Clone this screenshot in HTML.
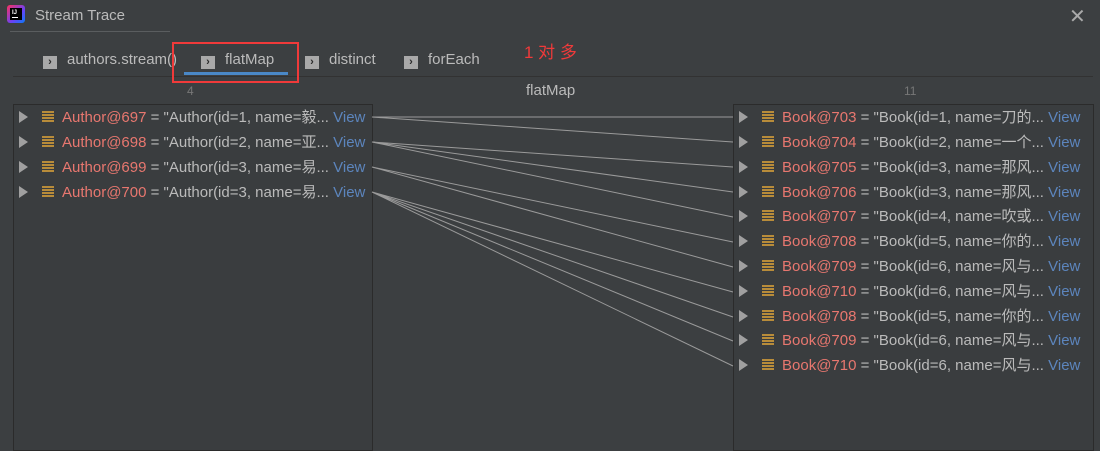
<!DOCTYPE html><html><head><style>
body{margin:0;width:1100px;height:444px;background:#3c3f41;font-family:"Liberation Sans","Noto Sans CJK SC",sans-serif;color:#bbbbbb;position:relative;overflow:hidden;font-size:15px}
.a{position:absolute;white-space:nowrap}
.panel{position:absolute;top:104px;height:345px;border:1px solid #2b2b2b;background:#3a3d3f;overflow:hidden}
.row{position:absolute;left:0;height:24px;line-height:24px;white-space:nowrap;font-size:15px}
.tri{display:inline-block;width:0;height:0;border-left:9px solid #a0a0a0;border-top:6px solid transparent;border-bottom:6px solid transparent;margin:0 14px 0 5px;vertical-align:-1px}
.ic{display:inline-block;width:12px;height:12px;margin-right:8px;vertical-align:-1px;background:repeating-linear-gradient(#b88c3a 0 2px,#3a3d3f 2px 3px)}
.r{color:#e8776f}.v{color:#5c85bd}
.tab{position:absolute;top:51px;font-size:15px;color:#bbbbbb}
.tab i{display:inline-block;width:14px;height:13px;background:#a9a9a9;color:#2b2b2b;font-style:normal;font-size:11px;line-height:13px;text-align:center;font-weight:bold;margin-right:10px;vertical-align:-1px}
</style></head><body>
<div class="a" style="left:7px;top:5px;width:18px;height:18px;background:linear-gradient(135deg,#fe315d,#6a41f5 60%,#087cfa);border-radius:3px"><div style="position:absolute;left:3px;top:3px;width:12px;height:12px;background:#000"><div style="position:absolute;left:2px;bottom:2px;width:6px;height:1px;background:#fff"></div><div style="position:absolute;left:2px;top:2px;color:#fff;font-size:6px;line-height:6px;font-weight:bold">IJ</div></div></div>
<div class="a" style="left:35px;top:7px;font-size:15px">Stream Trace</div>
<div class="a" style="left:10px;top:31px;width:160px;height:1px;background:#5a5d5f"></div>
<div class="a" style="left:1069px;top:4px;font-size:20px;color:#aaa">✕</div>
<div class="tab" style="left:43px"><i>›</i>authors.stream()</div>
<div class="tab" style="left:201px"><i>›</i>flatMap</div>
<div class="tab" style="left:305px"><i>›</i>distinct</div>
<div class="tab" style="left:404px"><i>›</i>forEach</div>
<div class="a" style="left:184px;top:72px;width:104px;height:3px;background:#4a88c7"></div>
<div class="a" style="left:13px;top:76px;width:1080px;height:1px;background:#323232"></div>
<div class="a" style="left:172px;top:42px;width:127px;height:41px;border:2px solid #f03a3a;box-sizing:border-box"></div>
<div class="a" style="left:524px;top:38px;font-size:17px;color:#f03a3a">1 对 多</div>
<div class="a" style="left:187px;top:84px;font-size:12px;color:#777">4</div>
<div class="a" style="left:526px;top:82px;font-size:15px">flatMap</div>
<div class="a" style="left:904px;top:84px;font-size:12px;color:#777">11</div>
<div class="panel" style="left:13px;width:358px">
<div class="row" style="top:1px"><span class="tri"></span><span class="ic"></span><span class="r">Author@697</span> = "Author(id=1, name=毅... <span class="v">View</span></div>
<div class="row" style="top:26px"><span class="tri"></span><span class="ic"></span><span class="r">Author@698</span> = "Author(id=2, name=亚... <span class="v">View</span></div>
<div class="row" style="top:51px"><span class="tri"></span><span class="ic"></span><span class="r">Author@699</span> = "Author(id=3, name=易... <span class="v">View</span></div>
<div class="row" style="top:76px"><span class="tri"></span><span class="ic"></span><span class="r">Author@700</span> = "Author(id=3, name=易... <span class="v">View</span></div>
</div>
<div class="panel" style="left:733px;width:359px">
<div class="row" style="top:1px"><span class="tri"></span><span class="ic"></span><span class="r">Book@703</span> = "Book(id=1, name=刀的... <span class="v">View</span></div>
<div class="row" style="top:26px"><span class="tri"></span><span class="ic"></span><span class="r">Book@704</span> = "Book(id=2, name=一个... <span class="v">View</span></div>
<div class="row" style="top:51px"><span class="tri"></span><span class="ic"></span><span class="r">Book@705</span> = "Book(id=3, name=那风... <span class="v">View</span></div>
<div class="row" style="top:76px"><span class="tri"></span><span class="ic"></span><span class="r">Book@706</span> = "Book(id=3, name=那风... <span class="v">View</span></div>
<div class="row" style="top:100px"><span class="tri"></span><span class="ic"></span><span class="r">Book@707</span> = "Book(id=4, name=吹或... <span class="v">View</span></div>
<div class="row" style="top:125px"><span class="tri"></span><span class="ic"></span><span class="r">Book@708</span> = "Book(id=5, name=你的... <span class="v">View</span></div>
<div class="row" style="top:150px"><span class="tri"></span><span class="ic"></span><span class="r">Book@709</span> = "Book(id=6, name=风与... <span class="v">View</span></div>
<div class="row" style="top:175px"><span class="tri"></span><span class="ic"></span><span class="r">Book@710</span> = "Book(id=6, name=风与... <span class="v">View</span></div>
<div class="row" style="top:200px"><span class="tri"></span><span class="ic"></span><span class="r">Book@708</span> = "Book(id=5, name=你的... <span class="v">View</span></div>
<div class="row" style="top:224px"><span class="tri"></span><span class="ic"></span><span class="r">Book@709</span> = "Book(id=6, name=风与... <span class="v">View</span></div>
<div class="row" style="top:249px"><span class="tri"></span><span class="ic"></span><span class="r">Book@710</span> = "Book(id=6, name=风与... <span class="v">View</span></div>
</div>
<svg class="a" style="left:0;top:0" width="1100" height="444"><g stroke="#9a9a9a" stroke-width="1" fill="none">
<path d="M372 117L733 117M372 117L733 142M372 142L733 167M372 142L733 192M372 142L733 217M372 167L733 242M372 167L733 267M372 192L733 292M372 192L733 317M372 192L733 341M372 192L733 366"/></g></svg>
</body></html>
